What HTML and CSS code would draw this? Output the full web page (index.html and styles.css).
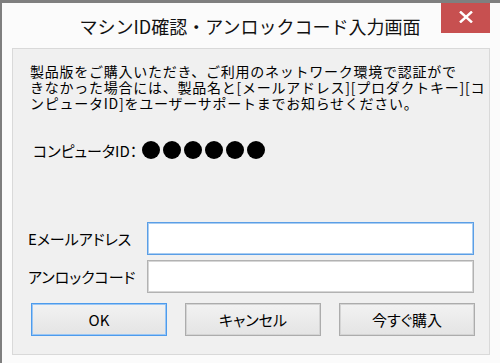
FILE: index.html
```html
<!DOCTYPE html>
<html lang="ja">
<head>
  <meta charset="UTF-8">
  <title>マシンID確認・アンロックコード入力画面</title>
  <link rel="stylesheet" href="styles.css">
</head>
<body>
  <div class="window">
    <div class="titlebar">
      <span class="title">マシンID確認・アンロックコード入力画面</span>
      <div class="close">
        <svg width="14" height="12" viewBox="0 0 14 12">
          <path d="M1 0.5 L13 11.5 M13 0.5 L1 11.5" stroke="#fff" stroke-width="2.4" fill="none"/>
        </svg>
      </div>
    </div>

    <div class="panel">
      <p class="message">製品版をご購入いただき、ご利用のネットワーク環境で認証がで<br>きなかった場合には、製品名と[メールアドレス][プロダクトキー][コ<br>ンピュータID]をユーザーサポートまでお知らせください。</p>

      <div class="machine-id">
        <span class="id-label">コンピュータID：</span>
        <span class="dot"></span><span class="dot"></span><span class="dot"></span><span class="dot"></span><span class="dot"></span><span class="dot"></span>
      </div>

      <div class="form">
        <div class="row">
          <label for="mail">Eメールアドレス</label>
          <input type="text" id="mail" class="field focused">
        </div>
        <div class="row">
          <label for="code">アンロックコード</label>
          <input type="text" id="code" class="field">
        </div>
      </div>

      <div class="buttons">
        <button class="btn default">OK</button>
        <button class="btn">キャンセル</button>
        <button class="btn">今すぐ購入</button>
      </div>
    </div>
  </div>
</body>
</html>
```

FILE: styles.css
```css
body {
  margin: 0;
  background-color: #fbfbfb;
  font-family: "Noto Sans CJK JP", "Noto Sans", sans-serif;
  color: #000;
}
.window {
  width: 498px;
  height: 360px;
  border-top: 3px solid #7f7f7f;
  border-left: 2px solid #7f7f7f;
  background-color: #fbfbfb;
  position: relative;
}
.titlebar {
  height: 45px;
  text-align: center;
  margin-left: -2px;
}
.title {
  font-size: 18px;
  line-height: 47px;
  color: #111;
}
.close {
  position: absolute;
  top: 0;
  left: 439px;
  width: 49px;
  height: 30px;
  background-color: #c75050;
  display: flex;
  align-items: center;
  justify-content: center;
}
.close svg {
  margin-top: -2px;
}
.panel {
  margin-left: 10px;
  width: 476px;
  height: 305px;
  border: 1px solid #d9d9d9;
  background-color: #f0f0f0;
}
.message {
  margin: 0;
  padding: 14px 0 0 17px;
  font-size: 14px;
  line-height: 16px;
  letter-spacing: 0.75px;
  white-space: nowrap;
}
.machine-id {
  display: flex;
  align-items: center;
  margin-top: 29px;
  padding-left: 20px;
  height: 20px;
  font-size: 15px;
  font-feature-settings: "palt";
}
.id-label {
  margin-right: 5px;
}
.dot {
  display: inline-block;
  width: 18px;
  height: 18px;
  border-radius: 50%;
  background-color: #000;
  margin-right: 3px;
}
.form {
  margin-top: 62px;
  padding-left: 15px;
  display: flex;
  flex-direction: column;
  gap: 5px;
  font-feature-settings: "palt";
}
.row {
  display: flex;
  align-items: center;
}
.row label {
  width: 119px;
  font-size: 15px;
}
.field {
  box-sizing: border-box;
  width: 327px;
  height: 33px;
  margin: 0;
  border: 1px solid #b2b2b2;
  box-shadow: inset 0 0 0 1px #d6d6d6;
  background-color: #fff;
  outline: none;
}
.field.focused {
  border-color: #5a9ee6;
  box-shadow: inset 0 0 0 1px #a9cdf2;
}
.buttons {
  display: flex;
  gap: 18px;
  margin-top: 10px;
  padding-left: 18px;
}
.btn {
  box-sizing: border-box;
  width: 136px;
  height: 33px;
  border: 1px solid #acacac;
  box-shadow: inset 0 0 0 1px #d4d4d4;
  background: linear-gradient(#f2f2f2, #e4e4e4);
  font-family: "Noto Sans CJK JP", "Noto Sans", sans-serif;
  font-size: 15px;
  color: #000;
  padding: 0;
  font-feature-settings: "palt";
}
.btn.default {
  border-color: #4d9bec;
  box-shadow: inset 0 0 0 1px #9ac6f4;
}
```
